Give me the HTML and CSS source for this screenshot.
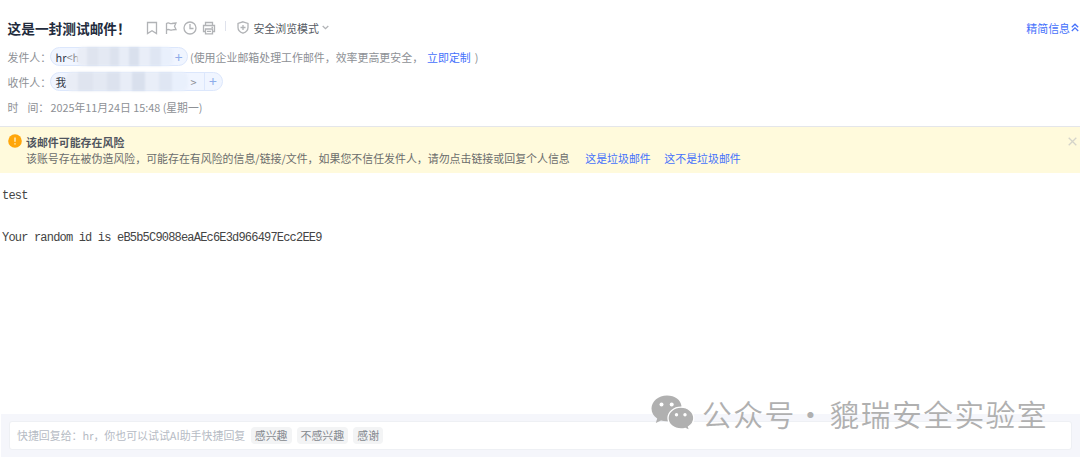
FILE: index.html
```
<!DOCTYPE html>
<html lang="zh-CN">
<head>
  <meta charset="UTF-8">
  <title>这是一封测试邮件！</title>
  <link rel="stylesheet" href="styles.css">
</head>
<body>
  <div class="mail">
    <div class="head">
      <div class="title-row">
        <h1>这是一封测试邮件！</h1>
        <div class="tools">
          <svg width="14" height="14" viewBox="0 0 14 14"><path d="M2.500 1.500h9v11L7 9.800l-4.500 2.700z"/></svg>
          <svg width="14" height="14" viewBox="0 0 14 14"><path d="M2.500 13V2.500C5 .8 6 3.300 8 2.500c1.500-.4 2.500-.5 4-.5l-1.500 3.300L12 8.500c-2 0-2.500 0-4 .5-2 .5-3-1.500-5.500 0"/></svg>
          <svg width="14" height="14" viewBox="0 0 14 14"><circle cx="7" cy="7" r="6"/><path d="M7 3v4.500h3.500"/></svg>
          <svg width="14" height="14" viewBox="0 0 14 14"><path d="M3.500 4.500v-3h7v3M3.500 10.500h-2v-6h11v6h-2M3.500 8h7v4.800h-7zM5 10.400h4M9.500 6.300h1.500"/></svg>
        </div>
        <i class="line"></i>
        <div class="safe">
          <svg width="12" height="13" viewBox="0 0 12 13"><path d="M6 .8l5 1.600v4.100c0 2.700-2 4.600-5 5.700-3-1.100-5-3-5-5.700V2.400zM6 4v5M3.500 6.500h5"/></svg>
          <span>安全浏览模式</span>
          <svg class="arrow" width="7" height="5" viewBox="0 0 7 5"><path d="M.7 1l2.800 2.700L6.300 1"/></svg>
        </div>
        <a class="simple">精简信息<svg width="8" height="9" viewBox="0 0 8 9"><path d="M.8 4.300L4 1.200l3.200 3.100M.8 8L4 4.900 7.200 8"/></svg></a>
      </div>
      <div class="row">
        <span class="label">发件人：</span>
        <span class="pill from"><b>hr</b>&lt;h<i class="mosaic"></i><em>+</em></span>
        <span class="tip">(使用企业邮箱处理工作邮件，效率更高更安全，<a>立即定制</a>)</span>
      </div>
      <div class="row">
        <span class="label">收件人：</span>
        <span class="pill to"><b>我</b><i class="mosaic"></i><span class="end">&gt;</span><em>+</em></span>
      </div>
      <div class="row">
        <span class="label time">时<span>间：</span></span>
        <span class="date">2025年11月24日 15:48 (星期一)</span>
      </div>
    </div>

    <div class="warn">
      <svg class="mark" width="14" height="14" viewBox="0 0 14 14"><circle cx="7" cy="7" r="6.800"/><path d="M7 3.500v4.300M7 9.300v1.300"/></svg>
      <div class="warn-text">
        <strong>该邮件可能存在风险</strong>
        <p>该账号存在被伪造风险，可能存在有风险的信息/链接/文件，如果您不信任发件人，请勿点击链接或回复个人信息<a>这是垃圾邮件</a><a>这不是垃圾邮件</a></p>
      </div>
      <svg class="close" width="9" height="9" viewBox="0 0 9 9"><path d="M.7.7l7.600 7.600M8.300.7L.7 8.300"/></svg>
    </div>

    <div class="content">
      <p>test</p>
      <p>Your random id is eB5b5C9088eaAEc6E3d966497Ecc2EE9</p>
    </div>

    <div class="reply">
      <div class="reply-box">
        <span>快捷回复给：hr，你也可以试试AI助手快捷回复</span>
        <button>感兴趣</button>
        <button>不感兴趣</button>
        <button>感谢</button>
      </div>
    </div>

    <div class="watermark">
      <svg width="44" height="36" viewBox="0 0 44 36">
        <path d="M16 .5C7.500.5.500 6.300.500 13.600c0 4.100 2.200 7.600 5.700 10L4.800 28l5.200-2.600c2 .6 4 .9 6.500.8h6l8-14.900C30 5 23.800.5 16 .5z"/>
        <path class="front" d="M30 12.200c-7.300 0-13 4.900-13 10.900s5.700 10.900 13 10.900c1.600 0 3-.2 4.400-.6l4.300 2.200-1.200-3.800c3.300-2 5.300-5.100 5.300-8.700 0-6-5.600-10.900-12.800-10.900z"/>
        <g class="eyes"><circle cx="10.500" cy="9.500" r="2"/><circle cx="20.700" cy="9.500" r="2"/><circle cx="25.500" cy="19.700" r="1.700"/><circle cx="34" cy="19.700" r="1.700"/></g>
      </svg>
      <span class="gzh">公众号</span><span class="dot">·</span><span class="name">貔瑞安全实验室</span>
    </div>
  </div>
</body>
</html>
```

FILE: styles.css
```
* {
  box-sizing: border-box;
  margin: 0;
  padding: 0;
}

body {
  background: #fff;
  color: #8d9095;
  font: 10.93px/16px "Noto Sans CJK SC", sans-serif;
}

svg {
  display: block;
  flex: none;
  fill: none;
  stroke: #b1b3b6;
  stroke-width: 1.3;
}

a {
  color: #4571fb;
}

.mail {
  position: relative;
  display: flex;
  flex-direction: column;
  height: 457px;
  overflow: hidden;
  white-space: nowrap;
}

.head {
  height: 127px;
  padding: 15px 0 0 7.500px;
  border-bottom: 1px solid #e4e6ea;
}

.title-row {
  display: flex;
  align-items: center;
  height: 25px;
  margin-bottom: 4px;
}

h1 {
  width: 137px;
  color: #222b3d;
  font-size: 13.7px;
  font-weight: 700;
}

.tools {
  display: flex;
  gap: 5.300px;
}

.line {
  width: 1px;
  height: 10px;
  margin: 0 11px 3px 9px;
  background: #dfe2ec;
}

.safe {
  display: flex;
  align-items: center;
  color: #555a63;
}

.safe span {
  margin: 0 3px 0 4px;
}

.simple {
  display: flex;
  align-items: center;
  margin-left: auto;
  padding-right: 1px;
}

.simple svg {
  margin-left: 1px;
  stroke: #4571fb;
}

.row {
  display: flex;
  align-items: center;
  height: 25.300px;
}

.label {
  width: 42px;
}

.time span {
  margin-left: 9px;
}

.date {
  margin-left: 1px;
  font-size: 10.8px;
}

.pill {
  display: flex;
  align-items: center;
  height: 19px;
  padding-left: 5px;
  border: 1px solid #dce7fc;
  border-radius: 10px;
  background: #f0f5ff;
}

.pill b {
  color: #333b4a;
  font-weight: 400;
}

.pill em {
  color: #8eacea;
  font-size: 14px;
  font-style: normal;
  text-align: center;
}

.from {
  width: 138px;
}

.from em {
  margin-left: auto;
  padding-right: 4px;
}

.to {
  width: 173px;
}

.to em {
  width: 18px;
  height: 17px;
  border-left: 1px solid #dce7fc;
}

.end {
  margin: 0 7px 0 auto;
}

/* 打码区域 */
.mosaic {
  width: 96px;
  height: 19px;
  margin-left: -2px;
  border-radius: 6px;
  background: linear-gradient(90deg, #e9edf6 0 10%, #dfe4ef 10% 22%, #e4e9f3 22% 34%, #dce2ee 34% 44%, #e8edf7 44% 54%, #d9e0ed 54% 65%, #e9eef8 65% 76%, #dfe6f3 76% 87%, #e9f0fc 87%);
  filter: blur(1px);
}

.to .mosaic {
  width: 122px;
  margin-left: 0;
}

.tip {
  margin-left: 2.500px;
}

.tip a {
  margin: 0 4px 0 4px;
}

.warn {
  display: flex;
  height: 46px;
  padding: 7px 3px 0 8px;
  background: #fffadc;
  color: #6b6d6c;
}

.mark {
  fill: #ffa60a;
  stroke: none;
}

.mark path {
  stroke: #fff1c9;
  stroke-width: 1.4;
}

.warn-text {
  margin-left: 4px;
}

.warn strong {
  display: block;
  color: #50555e;
}

.warn a {
  margin-left: 15.500px;
}

.warn a + a {
  margin-left: 13.500px;
}

.close {
  margin: 3px 0 0 auto;
  stroke: #d5d4ca;
}

.content {
  flex: 1;
  padding: 15px 2px;
  color: #444;
  font: 12px/16px "Liberation Mono", monospace;
  letter-spacing: -0.81px;
}

.content p + p {
  margin-top: 26px;
}

.reply {
  height: 43px;
  margin-left: 1px;
  padding: 7px 8px;
  background: #f5f6fb;
}

.reply-box {
  display: flex;
  align-items: center;
  height: 29px;
  padding: 0 0 1px 7px;
  border: 1px solid #eef0f4;
  border-radius: 3px;
  background: #fff;
  color: #b6bbc4;
}

.reply span {
  margin-right: 5.500px;
}

.reply button {
  height: 17px;
  margin-right: 5px;
  padding: 0 4px;
  border: 0;
  border-radius: 4px;
  background: #f3f4f5;
  color: #85898f;
  font: inherit;
}

.watermark {
  position: absolute;
  left: 651px;
  top: 395px;
  display: flex;
  color: #b0b0b0;
  font-size: 29.8px;
  font-weight: 350;
  letter-spacing: 1.4px;
  line-height: 36px;
}

.watermark svg {
  fill: #b0b0b0;
  stroke: none;
}

.watermark .front {
  stroke: #fff;
  stroke-width: 1.3;
}

.watermark .eyes {
  fill: #fff;
}

.gzh {
  margin-left: 7px;
}

.dot {
  width: 31px;
  margin-right: 3px;
  text-align: center;
}
```
